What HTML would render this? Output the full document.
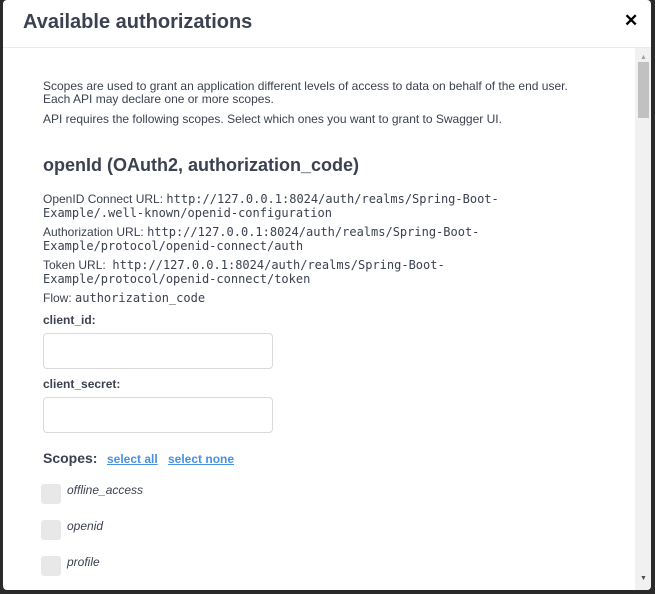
<!DOCTYPE html>
<html><head><style>
body{margin:0;width:655px;height:594px;background:#2a2a2a;overflow:hidden;font-family:"Liberation Sans",sans-serif;color:#3b4151;position:relative}
.modal{position:absolute;left:3px;top:0;width:648px;height:590px;background:#fff;border-radius:4px;overflow:hidden}
.hd{height:47px;border-bottom:1px solid #ebebeb;position:relative}
.hd h3{margin:0;position:absolute;left:20px;top:11px;font-size:20px;font-weight:bold}
.x{position:absolute;left:621px;top:11px;font-size:17px;font-weight:bold;color:#000}
.p{position:absolute;left:40px;font-size:12px;line-height:13px}
.u{line-height:14px}
code{font-family:"DejaVu Sans Mono",monospace;font-size:12px}
h4{position:absolute;left:40px;top:155px;margin:0;font-size:18px;font-weight:bold}
label{position:absolute;left:40px;font-size:12px;font-weight:bold}
.in{position:absolute;left:40px;width:228px;height:34px;border:1px solid #d9d9d9;border-radius:4px}
.cb{position:absolute;left:38px;width:20px;height:20px;background:#e8e8e8;border-radius:3px}
.sc{position:absolute;left:64px;font-size:12px;font-style:italic}
a{position:absolute;top:452px;color:#4990e2;text-decoration:underline;font-size:12px;font-weight:bold}
.sb{position:absolute;left:632px;top:48px;width:16px;height:542px;background:#f1f1f1}
.th{position:absolute;left:635px;top:62px;width:11px;height:56px;background:#c1c1c1}
</style></head><body>
<div class="modal">
<div class="hd"><h3>Available authorizations</h3><span class="x">✕</span></div>
<div class="p" style="top:80px">Scopes are used to grant an application different levels of access to data on behalf of the end user.<br>Each API may declare one or more scopes.</div>
<div class="p" style="top:113px">API requires the following scopes. Select which ones you want to grant to Swagger UI.</div>
<h4>openId (OAuth2, authorization_code)</h4>
<div class="p u" style="top:192px">OpenID Connect URL: <code>http://127.0.0.1:8024/auth/realms/Spring-Boot-<br>Example/.well-known/openid-configuration</code></div>
<div class="p u" style="top:225px">Authorization URL: <code>http://127.0.0.1:8024/auth/realms/Spring-Boot-<br>Example/protocol/openid-connect/auth</code></div>
<div class="p u" style="top:258px">Token URL:&nbsp; <code>http://127.0.0.1:8024/auth/realms/Spring-Boot-<br>Example/protocol/openid-connect/token</code></div>
<div class="p" style="top:292px">Flow: <code>authorization_code</code></div>
<label style="top:313px">client_id:</label>
<div class="in" style="top:333px"></div>
<label style="top:377px">client_secret:</label>
<div class="in" style="top:397px"></div>
<div style="position:absolute;left:40px;top:450px;font-size:14px;font-weight:bold">Scopes:</div>
<a style="left:104px">select all</a><a style="left:165px">select none</a>
<div class="cb" style="top:484px"></div><div class="sc" style="top:483px">offline_access</div>
<div class="cb" style="top:520px"></div><div class="sc" style="top:519px">openid</div>
<div class="cb" style="top:556px"></div><div class="sc" style="top:555px">profile</div>
<div class="sb"></div><div class="th"></div>
<div style="position:absolute;left:637px;top:54px;font-size:7px;color:#a3a3a3">▲</div>
<div style="position:absolute;left:637px;top:575px;font-size:7px;color:#505050">▼</div>
</div>
</body></html>
